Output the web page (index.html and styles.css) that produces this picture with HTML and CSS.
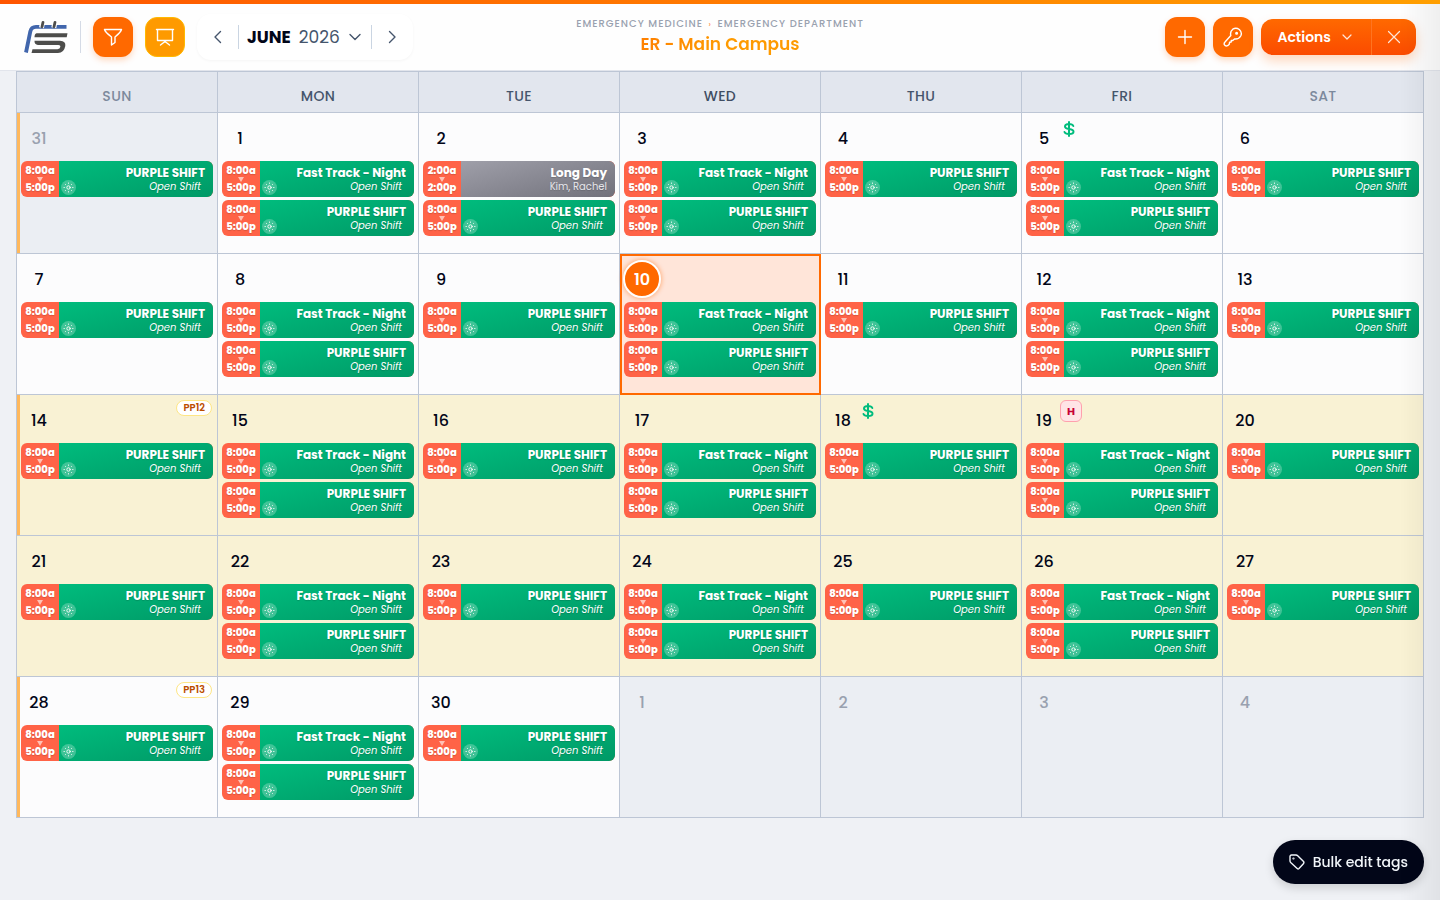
FILE: index.html
```html
<!DOCTYPE html>
<html lang="en">
<head>
    <meta charset="UTF-8">
    <meta name="viewport" content="width=device-width, initial-scale=1.0">
    <title>ER - Main Campus</title>
    <link rel="stylesheet" href="styles.css">
</head>
<body>

<header class="topbar">
    <div class="topbar-left">
        <a class="logo" href="#" aria-label="Home">
            <svg width="44" height="34" viewBox="0 0 44 34" fill="none">
                <path d="M2 32.500L6.300 11.500Q7.300 6.900 12 6.900H42.500" stroke="#4166ac" stroke-width="3.800"/>
                <path d="M18.700 1.500L17.500 7.800M31 1.500L29.800 7.800" stroke="#fff" stroke-width="5"/>
                <path d="M19 2.300L18 6.800M31 2.300L30 6.800" stroke="#4d4d4b" stroke-width="2.800" stroke-linecap="round"/>
                <path d="M12.500 13.200H43.500L42.700 17.200H10.500Q10.500 13.800 12.500 13.200Z" fill="#4d4d4b"/>
                <path d="M10.500 20.800H36Q42 21 41.300 26Q40 33 34 33H7.500L8.500 29.200H33.500Q36 29 36.400 26.800Q36.600 24.900 34.500 24.900H14Q10.300 24.500 10.500 20.800Z" fill="#4d4d4b"/>
            </svg>
        </a>
        <span class="divider"></span>
        <button class="icon-btn" aria-label="Filter">
            <svg width="20" height="20" viewBox="0 0 20 20"><path d="M1.500 2.500H18.500Q18 5 12 10V15.500L8.500 18V10Q2 5 1.500 2.500Z"/></svg>
        </button>
        <button class="icon-btn amber" aria-label="Board view">
            <svg width="20" height="20" viewBox="0 0 20 20"><path d="M1.500 2.500H18.500M2.500 2.500V13.500H17.500V2.500M10 13.500V15M5.500 18L10 14.500L14.500 18"/></svg>
        </button>
        <nav class="month-nav">
            <button class="nav-btn" aria-label="Previous month">
                <svg width="20" height="20" viewBox="0 0 20 20"><path d="M12.500 4.500L7 10L12.500 15.500"/></svg>
            </button>
            <button class="month-btn">
                <strong>JUNE</strong> <span>2026</span>
                <svg width="14" height="14" viewBox="0 0 14 14"><path d="M2 4.500L7 9.500L12 4.500"/></svg>
            </button>
            <button class="nav-btn" aria-label="Next month">
                <svg width="20" height="20" viewBox="0 0 20 20"><path d="M7.500 4.500L13 10L7.500 15.500"/></svg>
            </button>
        </nav>
    </div>

    <div class="heading">
        <p class="crumbs">EMERGENCY MEDICINE <i>›</i> EMERGENCY DEPARTMENT</p>
        <h1>ER - Main Campus</h1>
    </div>

    <div class="topbar-right">
        <button class="icon-btn" aria-label="Add">
            <svg width="20" height="20" viewBox="0 0 20 20"><path d="M10 3.500V16.500M3.500 10H16.500"/></svg>
        </button>
        <button class="icon-btn" aria-label="Permissions">
            <svg width="20" height="20" viewBox="0 0 20 20"><path d="M7.800 8.500Q6.800 4.500 9.800 2.200Q13 0 16.300 2.500Q19.500 5.500 17.700 9Q15.800 12.500 11.500 12L9.800 13.500L8.300 13.400L8.200 15L6.600 15.200L6.300 17.200L4.600 18.700Q2.500 19.500 1.300 17.700Q.8 16.200 2 15L7.800 8.500Z"/><circle cx="13.600" cy="6.300" r=".8"/></svg>
        </button>
        <div class="actions">
            <button class="actions-main">Actions
                <svg width="12" height="12" viewBox="0 0 12 12"><path d="M2 4L6 8L10 4"/></svg>
            </button>
            <button class="actions-close" aria-label="Close">
                <svg width="14" height="14" viewBox="0 0 14 14"><path d="M1.500 1.500L12.500 12.500M12.500 1.500L1.500 12.500"/></svg>
            </button>
        </div>
    </div>
</header>

<main>
    <table class="calendar">
        <thead>
            <tr>
                <th class="weekend">SUN</th>
                <th>MON</th>
                <th>TUE</th>
                <th class="midweek">WED</th>
                <th>THU</th>
                <th>FRI</th>
                <th class="weekend">SAT</th>
            </tr>
        </thead>
        <tbody id="days"></tbody>
    </table>
</main>

<button class="bulk-btn">
    <svg width="16" height="16" viewBox="0 0 16 16"><path d="M1 2.500Q1 1 2.500 1H7Q8 1 8.700 1.700L14.300 7.300Q15.500 8.500 14.400 9.700L10 14.500Q9 15.500 7.900 14.300L1.700 8.500Q1 7.800 1 6.800Z"/><circle cx="4.500" cy="4.500" r=".4"/></svg>
    Bulk edit tags
</button>
<div class="edge-shadow"></div>

<script src="calendar.js"></script>
</body>
</html>
```
FILE: styles.css
```css
* {
    box-sizing: border-box;
}
body {
    margin: 0;
    min-height: 100vh;
    background-color: #eff1f5;
    font-family: Poppins, Inter, sans-serif;
    color: #020618;
}
button {
    padding: 0;
    border: none;
    background: none;
    color: inherit;
    font-family: inherit;
    cursor: pointer;
}
svg {
    display: block;
    flex: none;
}
button svg {
    fill: none;
    stroke: currentColor;
    stroke-width: 1.4;
    stroke-linecap: round;
    stroke-linejoin: round;
}
body::before {
    content: "";
    display: block;
    height: 4px;
    background: linear-gradient(90deg, #ff5500, #ff9f00);
}

/* top bar */
.topbar {
    display: grid;
    grid-template-columns: 1fr auto 1fr;
    align-items: center;
    height: 67px;
    padding: 0 24px;
    background-color: #fefefe;
    border-bottom: 1px solid #e2e5ec;
}
.topbar-left, .topbar-right {
    display: flex;
    align-items: center;
}
.topbar-left {
    gap: 12px;
}
.topbar-right {
    justify-content: flex-end;
    gap: 8px;
}
.divider {
    width: 1px;
    height: 32px;
    background-color: #d5dbe6;
}
.icon-btn {
    display: flex;
    align-items: center;
    justify-content: center;
    width: 40px;
    height: 40px;
    border-radius: 12px;
    background-color: #ff6900;
    color: #fff;
    box-shadow: 0 3px 6px rgba(255, 105, 0, 0.25);
}
.icon-btn.amber {
    background-color: #fe9a00;
    border: 1px solid #ffb900;
    box-shadow: none;
}
.month-nav {
    display: flex;
    align-items: center;
    height: 46px;
    padding: 0 11px;
    border-radius: 14px;
    background-color: #fff;
    box-shadow: 0 1px 3px rgba(0, 0, 0, 0.04);
    color: #45556c;
}
.nav-btn {
    width: 20px;
    height: 24px;
}
.month-btn {
    display: flex;
    align-items: center;
    gap: 8px;
    height: 24px;
    margin: 0 10px;
    padding: 0 9px 0 8px;
    border: solid #cad5e2;
    border-width: 0 1px;
    font-size: 17px;
}
.month-btn strong {
    font-weight: 700;
    color: #020618;
}
.heading {
    text-align: center;
}
.crumbs {
    margin: 0;
    font-size: 10px;
    line-height: 14px;
    font-weight: 500;
    letter-spacing: 1px;
    color: #99a1af;
}
.crumbs i {
    margin: 0 2px;
    font-size: 8px;
    font-style: normal;
    color: #ff9a5c;
}
.heading h1 {
    margin: 0;
    font-size: 17px;
    line-height: 25px;
    font-weight: 600;
    background: linear-gradient(135deg, #ff6900, #fe9a00 50%);
    background-clip: text;
    -webkit-background-clip: text;
    color: transparent;
}
.actions {
    display: flex;
    height: 36px;
    border-radius: 12px;
    background: linear-gradient(#ff6900, #fb4b00);
    box-shadow: 0 6px 12px rgba(255, 105, 0, 0.25);
    color: #fff;
}
.actions-main {
    display: flex;
    align-items: center;
    gap: 10px;
    padding: 0 18px 0 16px;
    font-size: 14px;
    font-weight: 600;
}
.actions-main svg, .actions-close svg {
    stroke-width: 1.2;
    opacity: 0.85;
}
.actions-close {
    display: flex;
    align-items: center;
    justify-content: center;
    width: 45px;
    border-left: 1px solid #ff7421;
}

/* calendar */
main {
    padding: 0 16px 82px;
}
.calendar {
    width: 100%;
    table-layout: fixed;
    border-collapse: collapse;
}
th, td {
    padding: 0;
    border: 1px solid #bdc6d5;
}
th {
    height: 41px;
    padding-top: 8px;
    background-color: #e2e6ee;
    font-size: 14px;
    font-weight: 500;
    letter-spacing: 0.35px;
    color: #45556c;
}
th.weekend {
    color: #7c899c;
}
th.midweek {
    color: #3f4d62;
}
td {
    position: relative;
    height: 141px;
    background-color: #fcfcfd;
    vertical-align: top;
}
td.other {
    background-color: #ebeef3;
}
td.other .date {
    color: #99a1af;
}
td.pay {
    background-color: #f9f2d4;
}
td.period::before {
    content: "";
    position: absolute;
    inset: 0 auto 0 0;
    width: 3px;
    background-color: #ffb85c;
}
td.today {
    background-color: #ffe5d9;
    outline: 2px solid #ff6900;
    outline-offset: -2px;
}
.day {
    padding: 6px 4px 0;
}
.date {
    display: flex;
    align-items: center;
    justify-content: center;
    width: 36px;
    height: 38px;
    margin-bottom: 4px;
    font-size: 16px;
    font-weight: 500;
}
.today .date {
    width: 38px;
    margin-left: -1px;
    border: 2px solid #fff;
    border-radius: 50%;
    background-color: #ff6900;
    box-shadow: 0 0 4px 1px rgba(255, 105, 0, 0.4);
    color: #fff;
    font-weight: 600;
}
.shift {
    display: flex;
    height: 36px;
    margin-bottom: 3px;
    border-radius: 6px;
    overflow: hidden;
    background-color: #ff6347;
    color: #fff;
}
.times {
    display: flex;
    flex-direction: column;
    align-items: center;
    justify-content: center;
    width: 38px;
    font-size: 10px;
    line-height: 12px;
    font-weight: 800;
    text-shadow: 0 1px 1px rgba(0, 0, 0, 0.15);
}
.arrow {
    border: 3px solid transparent;
    border-top: 5px solid #ffc1b5;
    border-bottom: 0;
}
.info {
    position: relative;
    flex: 1;
    padding: 4px 8px 0 0;
    background: linear-gradient(165deg, #00bc7d, #009966);
    text-align: right;
    text-shadow: 0 1px 1px rgba(0, 0, 0, 0.15);
}
.taken .info {
    background: linear-gradient(165deg, #9f9fa9, #71717b);
}
.name {
    font-size: 12px;
    line-height: 15px;
    font-weight: 700;
}
.who {
    font-size: 10px;
    line-height: 13px;
    color: #e5e5ea;
}
.open .who {
    padding-right: 4px;
    font-style: italic;
    color: #fff;
}
.sun {
    position: absolute;
    left: 2px;
    bottom: 2px;
    width: 15px;
    height: 15px;
    border-radius: 50%;
    background-color: rgba(255, 255, 255, 0.25);
    fill: none;
    stroke: #fff;
    stroke-width: 0.9;
    stroke-linecap: round;
}
.badge {
    position: absolute;
    font-size: 10px;
    font-weight: 600;
}
.badge.pp {
    top: 5px;
    right: 5px;
    padding: 0 6px;
    border: 1px solid #fee685;
    border-radius: 9px;
    background-color: #fff;
    line-height: 14px;
    color: #bb4d00;
}
.badge.holiday {
    top: 5px;
    left: 38px;
    width: 22px;
    border: 1px solid #ffa1ad;
    border-radius: 6px;
    background-color: #ffe4e6;
    line-height: 20px;
    text-align: center;
    color: #c70036;
    font-size: 11px;
    font-weight: 700;
}
.badge.money {
    top: 8px;
    left: 41px;
    fill: none;
    stroke: #00bc7d;
    stroke-width: 2;
    stroke-linecap: round;
}

.bulk-btn {
    position: fixed;
    right: 16px;
    bottom: 16px;
    display: flex;
    align-items: center;
    gap: 8px;
    height: 44px;
    padding: 0 16px;
    border-radius: 22px;
    background-color: #020618;
    color: #f1f5f9;
    font-size: 14px;
    font-weight: 500;
    box-shadow: 0 4px 10px rgba(0, 0, 0, 0.15);
}
.edge-shadow {
    position: fixed;
    inset: 4px 0 0 auto;
    width: 40px;
    background: linear-gradient(90deg, rgba(0, 0, 0, 0), rgba(0, 0, 0, 0.06));
    pointer-events: none;
}
```
FILE: calendar.js
```js
const first = new Date(2026, 4, 31);
const payPeriods = { '6/14': 'PP12', '6/28': 'PP13' };
const holidays = ['6/19'];
const paydays = ['6/5', '6/18'];

const sunIcon = '<svg class="sun" viewBox="0 0 15 15"><circle cx="7.5" cy="7.5" r="1.7"/>' +
    '<path d="M7.5 3V3.4M7.5 11.600V12M3 7.500H3.400M11.600 7.500H12M4.400 4.400L4.600 4.600M10.400 10.400L10.600 10.600M4.400 10.600L4.600 10.400M10.400 4.600L10.600 4.400"/></svg>';
const moneyIcon = '<svg class="badge money" width="12" height="16" viewBox="0 0 12 16">' +
    '<path d="M6 1V15M10.300 5Q9.500 3 6 3Q2 3 2 5.500Q2 7.500 6 8Q10.500 8.500 10.500 10.700Q10.500 13 6 13Q2.300 13 1.500 11"/></svg>';

function shiftHTML(name, who, start, end) {
    return `<div class="shift ${who ? 'taken' : 'open'}">
        <div class="times"><span>${start}</span><span class="arrow"></span><span>${end}</span></div>
        <div class="info">
            <div class="name">${name}</div>
            <div class="who">${who || 'Open Shift'}</div>
            ${who ? '' : sunIcon}
        </div>
    </div>`;
}

function shiftsFor(date, key) {
    let html = '';
    if (date > new Date(2026, 5, 30)) return html;
    if (key === '6/2') {
        html += shiftHTML('Long Day', 'Kim, Rachel', '2:00a', '2:00p');
    }
    // Fast Track runs Monday, Wednesday and Friday
    if ([1, 3, 5].includes(date.getDay())) {
        html += shiftHTML('Fast Track - Night', '', '8:00a', '5:00p');
    }
    return html + shiftHTML('PURPLE SHIFT', '', '8:00a', '5:00p');
}

let rows = '';
for (let week = 0; week < 5; week++) {
    rows += '<tr>';
    for (let day = 0; day < 7; day++) {
        const date = new Date(2026, 4, first.getDate() + week * 7 + day);
        const key = (date.getMonth() + 1) + '/' + date.getDate();
        const classes = [];
        if (date.getMonth() !== 5) classes.push('other');
        if (week === 2 || week === 3) classes.push('pay');
        if (day === 0 && week % 2 === 0) classes.push('period');
        if (key === '6/10') classes.push('today');

        let badges = '';
        if (payPeriods[key]) badges += `<span class="badge pp">${payPeriods[key]}</span>`;
        if (holidays.includes(key)) badges += '<span class="badge holiday">H</span>';
        if (paydays.includes(key)) badges += moneyIcon;

        rows += `<td class="${classes.join(' ')}"><div class="day">
            <div class="date">${date.getDate()}</div>${badges}${shiftsFor(date, key)}
        </div></td>`;
    }
    rows += '</tr>';
}
document.getElementById('days').innerHTML = rows;
```
